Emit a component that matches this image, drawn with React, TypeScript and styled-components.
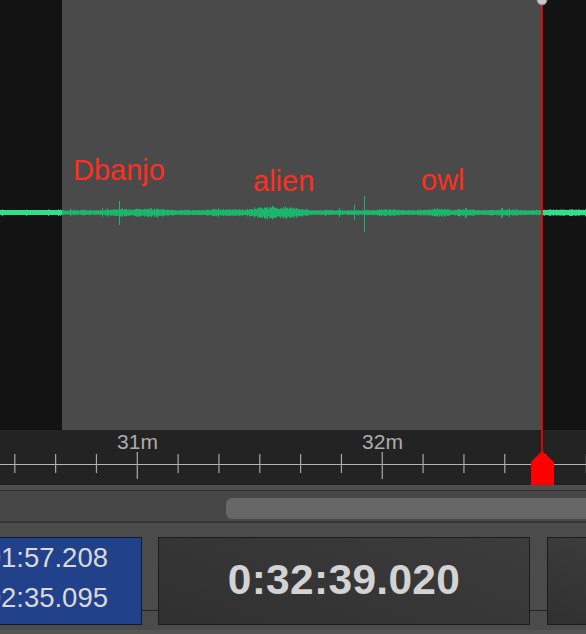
import styled, { createGlobalStyle } from "styled-components";

const GlobalStyle = createGlobalStyle`
  html, body {
    margin: 0;
    padding: 0;
    background: #4b4b4b;
  }
`;

const Frame = styled.div`
  width: 586px;
  height: 634px;
  overflow: hidden;
  display: flex;
  flex-direction: column;
  background: #4b4b4b;
  font-family: "Liberation Sans", Arial, Helvetica, sans-serif;
`;

const Timeline = styled.div`
  position: relative;
  display: flex;
  flex-direction: column;
`;

const WaveArea = styled.div`
  position: relative;
  height: 430px;
  background: #131313;
  overflow: hidden;
`;

const Selection = styled.div<{ $left: number; $right: number }>`
  position: absolute;
  top: 0;
  bottom: 0;
  left: ${({ $left }) => $left}px;
  width: ${({ $left, $right }) => $right - $left}px;
  background: #4a4a4a;
`;

const Layer = styled.svg`
  position: absolute;
  left: 0;
  top: 0;
`;

const ClipName = styled.span<{ $x: number; $y: number }>`
  position: absolute;
  left: ${({ $x }) => $x}px;
  top: ${({ $y }) => $y}px;
  font-size: 29px;
  line-height: 29px;
  color: #ff2f1f;
  white-space: nowrap;
`;

const Ruler = styled.div`
  position: relative;
  height: 55px;
  background: #232323;
`;

const RulerLabel = styled.span<{ $x: number }>`
  position: absolute;
  top: 1px;
  left: ${({ $x }) => $x}px;
  transform: translateX(-50%);
  font-size: 21px;
  line-height: 21px;
  color: #acacac;
  background: #232323;
  padding: 0 1px;
`;

const Playhead = styled.svg`
  position: absolute;
  left: 525px;
  top: 0;
  pointer-events: none;
`;

const ScrollStrip = styled.div`
  height: 5px;
  background: #4e4e4e;
  border-bottom: 1px solid #2f2f2f;
`;

const ScrollTrack = styled.div`
  box-sizing: border-box;
  height: 32px;
  padding: 7px 0 0 226px;
  background: #474747;
  border-bottom: 2px solid #353535;
  overflow: hidden;
`;

const ScrollThumb = styled.div`
  width: 400px;
  height: 21px;
  border-radius: 6px;
  background: #676767;
`;

const Panel = styled.div`
  flex: 1;
  display: flex;
  flex-direction: column;
  padding-top: 14px;
  background: #4b4b4b;
`;

const BoxRow = styled.div`
  display: flex;
  gap: 16px;
  height: 88px;
  background: linear-gradient(#232323, #232323) 0 73px / 100% 1px no-repeat;
`;

const RangeBox = styled.div`
  width: 142px;
  box-sizing: border-box;
  flex-shrink: 0;
  background: #21418a;
  border: 1px solid #0f1b36;
  border-left: none;
  padding-right: 33px;
  display: flex;
  flex-direction: column;
  align-items: flex-end;
  overflow: hidden;
`;

const RangeValue = styled.div`
  font-size: 27.5px;
  line-height: 40px;
  color: #d9d9d9;
  white-space: nowrap;
`;

const DisplayBox = styled.div<{ $wide?: boolean }>`
  box-sizing: border-box;
  ${({ $wide }) => ($wide ? "width: 372px; flex-shrink: 0;" : "flex: 1; margin-left: 1px;")}
  background: linear-gradient(200deg, #3c3c3c 0%, #303030 100%);
  border: 1px solid #1c1c1c;
  ${({ $wide }) => ($wide ? "" : "border-right: none;")}
  display: flex;
  align-items: center;
  justify-content: center;
`;

const Clock = styled.div`
  font-size: 42.5px;
  font-weight: bold;
  color: #d3d3d3;
  letter-spacing: 0.3px;
  padding-bottom: 2px;
`;

const BottomEdge = styled.div`
  margin-top: 5px;
  flex: 1;
  background: #555555;
`;

// deterministic noise for the waveform
function makeRand(seed: number) {
  let s = seed;
  return () => {
    s = (s * 16807) % 2147483647;
    return s / 2147483647;
  };
}

const bump = (x: number, c: number, w: number, a: number) =>
  a * Math.exp(-((x - c) * (x - c)) / (2 * w * w));

function buildWave() {
  const rnd = makeRand(1234567);
  const mid = 212.5;
  let d = "";
  for (let x = 0; x < 586; x++) {
    let env = 1.2;
    if (x < 62) env = 0.4;
    env += bump(x, 150, 12, 2.5);
    env += bump(x, 120, 10, 1.2);
    env += bump(x, 232, 18, 1.2);
    env += bump(x, 272, 12, 4.2);
    env += bump(x, 296, 8, 2);
    env += bump(x, 385, 10, 1.2);
    env += bump(x, 440, 8, 1.6);
    env += bump(x, 465, 6, 2);
    env += bump(x, 505, 8, 1);
    env += bump(x, 565, 12, 1.2);
    const r = rnd();
    let a = env * (0.35 + 0.65 * r);
    if (rnd() > 0.93) a += 2 * rnd();
    const up = a * (0.7 + 0.3 * rnd());
    d += `M${x + 0.5} ${(mid - 1.5 - up).toFixed(1)}V${(mid + 1.5 + a).toFixed(1)}`;
  }
  // spikes
  d += "M119.5 201V225M364.5 196V232M354.5 205V220M102.5 208V217";
  return d;
}

const wavePath = buildWave();

const ticks = Array.from({ length: 15 }, (_, k) => 14.8 + 40.83 * k);

export default function App() {
  return (
    <Frame>
      <GlobalStyle />
      <Timeline>
        <WaveArea>
          <Selection $left={62} $right={542} />
          <Layer width={586} height={430}>
            <defs>
              <clipPath id="inSel">
                <rect x={62} y={0} width={480} height={430} />
              </clipPath>
              <clipPath id="outLeft">
                <rect x={0} y={0} width={62} height={430} />
              </clipPath>
              <clipPath id="outRight">
                <rect x={542} y={0} width={44} height={430} />
              </clipPath>
            </defs>
            <g clipPath="url(#inSel)">
              <rect x={0} y={211} width={586} height={3} fill="#1bb56b" />
              <path d={wavePath} stroke="#1bb56b" strokeWidth={1} fill="none" />
            </g>
            <g clipPath="url(#outLeft)">
              <rect x={0} y={210} width={586} height={5} fill="#30de8c" />
              <path d={wavePath} stroke="#30de8c" strokeWidth={1} fill="none" />
            </g>
            <g clipPath="url(#outRight)">
              <rect x={0} y={210} width={586} height={5} fill="#30de8c" />
              <path d={wavePath} stroke="#30de8c" strokeWidth={1} fill="none" />
            </g>
          </Layer>
          <ClipName $x={73} $y={156}>Dbanjo</ClipName>
          <ClipName $x={253} $y={167}>alien</ClipName>
          <ClipName $x={421} $y={166}>owl</ClipName>
        </WaveArea>
        <Ruler>
          <Layer width={586} height={55}>
            <line x1={0} x2={586} y1={34.5} y2={34.5} stroke="#b4b4b4" strokeWidth={1} />
            {ticks.map((x, i) => {
              const major = i === 3 || i === 9;
              return (
                <line
                  key={i}
                  x1={x}
                  x2={x}
                  y1={major ? 17 : 24}
                  y2={major ? 49 : 43}
                  stroke="#a8a8a8"
                  strokeWidth={1.2}
                />
              );
            })}
          </Layer>
          <RulerLabel $x={137.5}>31m</RulerLabel>
          <RulerLabel $x={382.5}>32m</RulerLabel>
        </Ruler>
        <Playhead width={40} height={485}>
          <line x1={17} x2={17} y1={0} y2={455} stroke="#ff0000" strokeWidth={1.6} />
          <polygon points="6,462 17,451 29,462 29,485 6,485" fill="#ff0000" />
          <circle cx={17} cy={0} r={5} fill="#cfc7c7" stroke="#8a8080" strokeWidth={1} />
        </Playhead>
      </Timeline>
      <ScrollStrip />
      <ScrollTrack>
        <ScrollThumb />
      </ScrollTrack>
      <Panel>
        <BoxRow>
          <RangeBox>
            <RangeValue>01:57.208</RangeValue>
            <RangeValue>02:35.095</RangeValue>
          </RangeBox>
          <DisplayBox $wide>
            <Clock>0:32:39.020</Clock>
          </DisplayBox>
          <DisplayBox />
        </BoxRow>
        <BottomEdge />
      </Panel>
    </Frame>
  );
}
